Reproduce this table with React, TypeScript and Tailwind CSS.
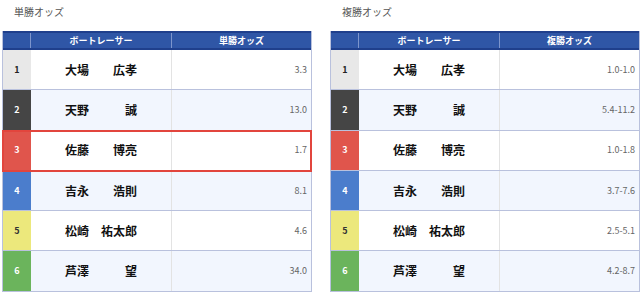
import React from "react";

type Row = { no: number; name: string; odds: string };

const numStyles: { [key: number]: string } = {
  1: "bg-[#e8e8e8] text-[#222]",
  2: "bg-[#454545] text-white",
  3: "bg-[#e0554c] text-white",
  4: "bg-[#4b7dcc] text-white",
  5: "bg-[#ece87c] text-[#333]",
  6: "bg-[#6bb45c] text-white",
};

const names = [
  "大場　　広孝",
  "天野　　　誠",
  "佐藤　　博亮",
  "吉永　　浩則",
  "松崎　祐太郎",
  "芦澤　　　望",
];

const winOdds = ["3.3", "13.0", "1.7", "8.1", "4.6", "34.0"];
const placeOdds = ["1.0-1.0", "5.4-11.2", "1.0-1.8", "3.7-7.6", "2.5-5.1", "4.2-8.7"];

const OddsTable: React.FC<{ title: string; rows: Row[]; highlight?: number }> = ({
  title,
  rows,
  highlight,
}) => {
  return (
    <div className="w-[310px] shrink-0">
      <div className="h-[31px] pl-[12px] pt-[4px] text-[10px] leading-[16px] text-[#555]">
        {title}
      </div>
      <div className="border-x border-[#b9c1dd]">
        {/* header */}
        <div className="grid grid-cols-[28px_141px_1fr] h-[19px] bg-[#2f56a6] border-y-2 border-t-[#1f3f8c] border-b-[#1f3f8c] text-white text-[9px] font-bold leading-[15px]">
          <div className="border-r border-[#7d95cc]" />
          <div className="border-r border-[#7d95cc] text-center">ボートレーサー</div>
          <div className="text-center">{title}</div>
        </div>
        {rows.map((r, i) => (
          <div
            key={r.no}
            className={`grid grid-cols-[28px_141px_1fr] h-[40.3px] border-b border-[#b9c1dd] ${
              i % 2 === 1 ? "bg-[#f2f6fe]" : "bg-white"
            } ${highlight === r.no ? "outline-2 outline-[#e2453d] -outline-offset-1 relative" : ""}`}
          >
            <div
              className={`flex items-center justify-center text-[9px] font-bold ${numStyles[r.no]}`}
            >
              {r.no}
            </div>
            <div className="flex items-center justify-center border-r border-[#e3e3e3] text-[12px] font-bold text-[#111]">
              {r.name}
            </div>
            <div className="flex items-center justify-end pr-[4px] text-[9px] text-[#666]">
              {r.odds}
            </div>
          </div>
        ))}
      </div>
    </div>
  );
};

export default function App() {
  const win = names.map((n, i) => ({ no: i + 1, name: n, odds: winOdds[i] }));
  const place = names.map((n, i) => ({ no: i + 1, name: n, odds: placeOdds[i] }));
  return (
    <div
      className="w-[640px] h-[294px] bg-white flex pl-[2px] gap-[18px] overflow-hidden"
      style={{ fontFamily: '"Noto Sans CJK JP", "Noto Sans", sans-serif' }}
    >
      <OddsTable title="単勝オッズ" rows={win} highlight={3} />
      <OddsTable title="複勝オッズ" rows={place} />
    </div>
  );
}
